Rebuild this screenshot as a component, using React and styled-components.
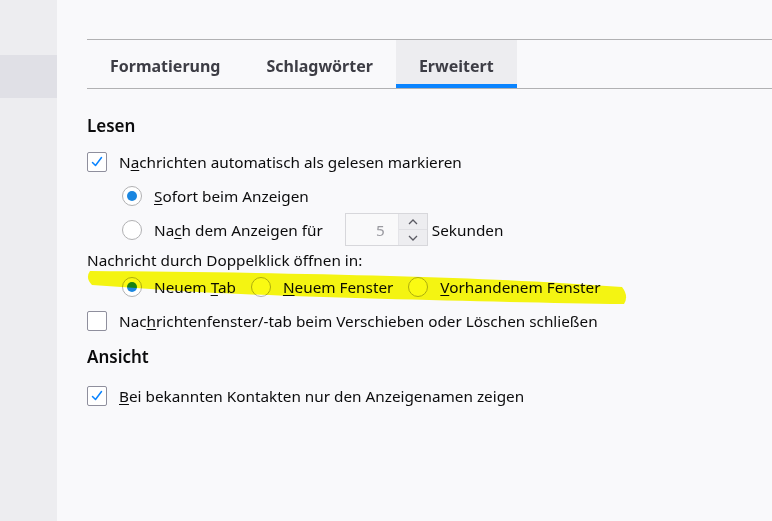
import React from 'react'
import styled, { createGlobalStyle } from 'styled-components'

const GlobalStyle = createGlobalStyle`
  html, body {
    margin: 0;
    padding: 0;
    background: #f9f9fb;
  }
  body {
    font-family: "Noto Sans", "Open Sans", sans-serif;
    color: #0c0c0d;
  }
`;

const Page = styled.div`
  position: relative;
  display: flex;
  width: 772px;
  height: 521px;
  overflow: hidden;
  background: #f9f9fb;
`;

const Sidebar = styled.div`
  width: 57px;
  flex-shrink: 0;
  background: #ededf0;
  padding-top: 55px;
  box-sizing: border-box;
`;

const SideItem = styled.div`
  height: 43px;
  background: ${p => (p.$active ? '#e0e0e6' : 'transparent')};
`;

const Main = styled.div`
  flex: 1;
  padding: 39px 0 0 30px;
`;

const TabBar = styled.div`
  display: flex;
  border-top: 1px solid #b1b1b3;
  border-bottom: 1px solid #b1b1b3;
  height: 48px;
`;

const Tab = styled.div`
  display: flex;
  align-items: center;
  padding: 3px 23px 0;
  font-size: 16px;
  font-weight: 700;
  color: #3d3d45;
  background: ${p => (p.$active ? '#ededf0' : 'transparent')};
  box-shadow: ${p => (p.$active ? 'inset 0 -4px 0 #0a84ff' : 'none')};
`;

const Content = styled.div`
  padding-top: 25px;
  font-size: 15.3px;
`;

const Heading = styled.div`
  font-size: 17px;
  font-weight: 600;
  height: 24px;
  line-height: 24px;
  margin-top: ${p => p.$top || 0}px;
  margin-bottom: 7px;
`;

const Row = styled.div`
  display: flex;
  align-items: center;
  height: ${p => p.$h || 34}px;
  padding-left: ${p => p.$indent || 0}px;
  gap: ${p => p.$gap || 0}px;
  white-space: nowrap;
`;

const Option = styled.label`
  display: flex;
  align-items: center;
  gap: 12px;
`;

const Box = styled.span`
  width: 20px;
  height: 20px;
  box-sizing: border-box;
  border: 1px solid #8f8f9d;
  border-radius: 2px;
  background: #fff;
  display: flex;
  align-items: center;
  justify-content: center;
`;

const Radio = styled.span`
  width: 20px;
  height: 20px;
  box-sizing: border-box;
  border: 1px solid #b1b1b3;
  border-radius: 50%;
  background: #fff;
  display: flex;
  align-items: center;
  justify-content: center;

  &::after {
    content: '';
    width: 10px;
    height: 10px;
    border-radius: 50%;
    background: ${p => (p.$on ? '#1a86e0' : 'transparent')};
  }
`;

const Key = styled.span`
  text-decoration: underline;
  text-underline-offset: 2px;
`;

const Spin = styled.div`
  display: flex;
  width: 83px;
  height: 33px;
  box-sizing: border-box;
  border: 1px solid #d7d7db;
  background: #f9f9fa;
  margin: 0 4px 0 22px;
`;

const SpinValue = styled.div`
  flex: 1;
  display: flex;
  align-items: center;
  justify-content: flex-end;
  padding-right: 13px;
  color: #9a9aa0;
`;

const SpinButtons = styled.div`
  width: 28px;
  display: flex;
  flex-direction: column;
  border-left: 1px solid #e4e4e8;
`;

const SpinButton = styled.div`
  flex: 1;
  display: flex;
  align-items: center;
  justify-content: center;
  background: #ededf0;
  & + & {
    border-top: 1px solid #e0e0e4;
  }
`;

const Highlight = styled.svg`
  position: absolute;
  left: 0;
  top: 0;
  pointer-events: none;
  mix-blend-mode: multiply;
`;

const Check = () => (
  <Box>
    <svg width="14" height="14" viewBox="0 0 14 14">
      <path d="M2.5 7.5 L5.5 10.5 L11.5 2.5" fill="none" stroke="#0a84ff" strokeWidth="1.5" strokeLinecap="round" strokeLinejoin="round" />
    </svg>
  </Box>
);

const Chevron = ({ up }) => (
  <svg width="10" height="6" viewBox="0 0 10 6">
    <path d={up ? 'M1 5 L5 1 L9 5' : 'M1 1 L5 5 L9 1'} fill="none" stroke="#5a5a62" strokeWidth="1.3" />
  </svg>
);

export default function App() {
  return (
    <Page>
      <GlobalStyle />
      <Sidebar>
        <SideItem $active />
      </Sidebar>
      <Main>
        <TabBar>
          <Tab>Formatierung</Tab>
          <Tab>Schlagwörter</Tab>
          <Tab $active>Erweitert</Tab>
        </TabBar>
        <Content>
          <Heading>Lesen</Heading>
          <Row>
            <Option>
              <Check />
              <span>N<Key>a</Key>chrichten automatisch als gelesen markieren</span>
            </Option>
          </Row>
          <Row $indent={35}>
            <Option>
              <Radio $on />
              <span><Key>S</Key>ofort beim Anzeigen</span>
            </Option>
          </Row>
          <Row $indent={35} $h={33}>
            <Option>
              <Radio />
              <span>Na<Key>c</Key>h dem Anzeigen für</span>
            </Option>
            <Spin>
              <SpinValue>5</SpinValue>
              <SpinButtons>
                <SpinButton><Chevron up /></SpinButton>
                <SpinButton><Chevron /></SpinButton>
              </SpinButtons>
            </Spin>
            <span>Sekunden</span>
          </Row>
          <Row $h={28}>Nachricht durch Doppelklick öffnen in:</Row>
          <Row $indent={35} $gap={15} $h={26}>
            <Option>
              <Radio $on />
              <span>Neuem <Key>T</Key>ab</span>
            </Option>
            <Option>
              <Radio />
              <span><Key>N</Key>euem Fenster</span>
            </Option>
            <Option>
              <Radio />
              <span><Key>V</Key>orhandenem Fenster</span>
            </Option>
          </Row>
          <Row $h={42}>
            <Option>
              <Box />
              <span>Nac<Key>h</Key>richtenfenster/-tab beim Verschieben oder Löschen schließen</span>
            </Option>
          </Row>
          <Heading $top={3}>Ansicht</Heading>
          <Row $h={40}>
            <Option>
              <Check />
              <span><Key>B</Key>ei bekannten Kontakten nur den Anzeigenamen zeigen</span>
            </Option>
          </Row>
        </Content>
      </Main>
      <Highlight width="772" height="521" viewBox="0 0 772 521">
        <path
          d="M90 271 C250 272 450 276 560 283 L622 287 Q629 296 624 304 C500 302 300 298 180 291 L92 285 Q85 278 90 271 Z"
          fill="#fafa12"
        />
      </Highlight>
    </Page>
  )
}
